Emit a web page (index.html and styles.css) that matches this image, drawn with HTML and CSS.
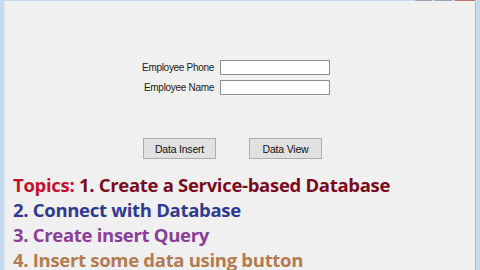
FILE: index.html
```html
<!DOCTYPE html>
<html lang="en">
<head>
    <meta charset="UTF-8">
    <title>Employee Form</title>
    <link rel="stylesheet" href="styles.css">
</head>
<body>
    <div class="window">
        <div class="caption">
            <span class="cap-btn"></span>
            <span class="cap-btn"></span>
            <span class="cap-btn close"></span>
        </div>
        <div class="client">
            <div class="form">
                <div class="row">
                    <label>Employee Phone</label>
                    <input type="text" class="box">
                </div>
                <div class="row">
                    <label>Employee Name</label>
                    <input type="text" class="box">
                </div>
            </div>
            <div class="buttons">
                <button class="btn">Data Insert</button>
                <button class="btn">Data View</button>
            </div>
            <div class="topics">
                <div class="line"><span class="red">Topics:</span> <span class="maroon">1. Create a Service-based Database</span></div>
                <div class="line blue">2. Connect with Database</div>
                <div class="line purple">3. Create insert Query</div>
                <div class="line brown">4. Insert some data using button</div>
            </div>
        </div>
    </div>
</body>
</html>
```
FILE: styles.css
```css
body {
    margin: 0;
    width: 480px;
    height: 270px;
    overflow: hidden;
    background-color: #c6d9ef;
    font-family: "Liberation Sans", Arial, sans-serif;
}
.window {
    height: 270px;
    padding: 0 4px 0 4px;
    box-sizing: border-box;
    display: flex;
    flex-direction: column;
}
.caption {
    height: 3px;
    display: flex;
    justify-content: flex-end;
    gap: 3px;
    padding-right: 1px;
}
.cap-btn {
    width: 17px;
    height: 1px;
    background-color: #9aa6b4;
}
.cap-btn.close {
    width: 20px;
    background-color: #b8766e;
}
.client {
    flex: 1;
    background-color: #f0f0f0;
    border-left: 1px solid #dde6f0;
    border-right: 1px solid #a9bdd6;
}
.form {
    padding-top: 59px;
    display: flex;
    flex-direction: column;
    gap: 5px;
}
.row {
    display: flex;
    align-items: center;
    height: 15px;
}
.row label {
    width: 209px;
    text-align: right;
    font-size: 10px;
    letter-spacing: -0.3px;
    color: #1a1a1a;
    padding-right: 6px;
}
.box {
    width: 110px;
    height: 15px;
    box-sizing: border-box;
    border: 1px solid #8f8f8f;
    background-color: #fff;
    margin: 0;
    padding: 0;
}
.buttons {
    padding-top: 43px;
    display: flex;
    gap: 33px;
    padding-left: 138px;
}
.btn {
    width: 73px;
    height: 21px;
    border: 1px solid #acacac;
    background-color: #e1e1e1;
    font-family: "Liberation Sans", Arial, sans-serif;
    font-size: 10.5px;
    letter-spacing: -0.2px;
    color: #111;
    padding: 0;
}
.topics {
    padding: 13px 0 0 8px;
    font-family: "Open Sans", sans-serif;
    font-weight: bold;
    font-size: 18.5px;
    letter-spacing: -0.3px;
}
.line {
    height: 25px;
    line-height: 25px;
    white-space: nowrap;
}
.red { color: #c8102e; }
.maroon { color: #7b0b1c; }
.blue { color: #2f3a93; }
.purple { color: #8b3d99; }
.brown { color: #b27b52; }
```
